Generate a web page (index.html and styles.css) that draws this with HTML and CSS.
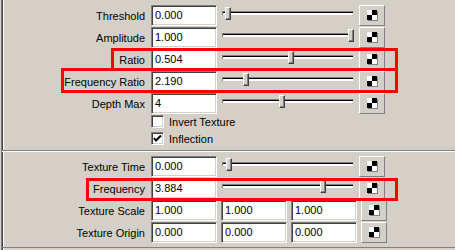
FILE: index.html
```html
<!DOCTYPE html>
<html>
<head>
<title>Texture Attributes</title>
<link rel="stylesheet" href="styles.css">
</head>
<body>
<div class="panel">
    <div class="section upper">
        <div class="row">
            <span class="lbl">Threshold</span>
            <span class="fld">0.000</span>
            <div class="slider"><div class="track"></div><div class="thumb" style="left:4px"></div></div>
            <span class="map"><svg width="11" height="11" viewBox="0 0 11 11"><rect x="1" y="1" width="10" height="10" fill="#808080"/><rect x="0" y="0" width="10" height="10" fill="#fff"/><rect x="5" y="0" width="5" height="5" fill="#000"/><rect x="0" y="5" width="5" height="5" fill="#000"/></svg></span>
        </div>
        <div class="row">
            <span class="lbl">Amplitude</span>
            <span class="fld">1.000</span>
            <div class="slider"><div class="track"></div><div class="thumb" style="left:127px"></div></div>
            <span class="map"><svg width="11" height="11" viewBox="0 0 11 11"><rect x="1" y="1" width="10" height="10" fill="#808080"/><rect x="0" y="0" width="10" height="10" fill="#fff"/><rect x="5" y="0" width="5" height="5" fill="#000"/><rect x="0" y="5" width="5" height="5" fill="#000"/></svg></span>
        </div>
        <div class="row">
            <span class="lbl">Ratio</span>
            <span class="fld">0.504</span>
            <div class="slider"><div class="track"></div><div class="thumb" style="left:67px"></div></div>
            <span class="map"><svg width="11" height="11" viewBox="0 0 11 11"><rect x="1" y="1" width="10" height="10" fill="#808080"/><rect x="0" y="0" width="10" height="10" fill="#fff"/><rect x="5" y="0" width="5" height="5" fill="#000"/><rect x="0" y="5" width="5" height="5" fill="#000"/></svg></span>
        </div>
        <div class="row">
            <span class="lbl">Frequency Ratio</span>
            <span class="fld">2.190</span>
            <div class="slider"><div class="track"></div><div class="thumb" style="left:22px"></div></div>
            <span class="map"><svg width="11" height="11" viewBox="0 0 11 11"><rect x="1" y="1" width="10" height="10" fill="#808080"/><rect x="0" y="0" width="10" height="10" fill="#fff"/><rect x="5" y="0" width="5" height="5" fill="#000"/><rect x="0" y="5" width="5" height="5" fill="#000"/></svg></span>
        </div>
        <div class="row">
            <span class="lbl">Depth Max</span>
            <span class="fld">4</span>
            <div class="slider"><div class="track"></div><div class="thumb" style="left:58px"></div></div>
            <span class="map"><svg width="11" height="11" viewBox="0 0 11 11"><rect x="1" y="1" width="10" height="10" fill="#808080"/><rect x="0" y="0" width="10" height="10" fill="#fff"/><rect x="5" y="0" width="5" height="5" fill="#000"/><rect x="0" y="5" width="5" height="5" fill="#000"/></svg></span>
        </div>
        <div class="check"><span class="box"></span>Invert Texture</div>
        <div class="check"><span class="box"><svg width="9" height="9" viewBox="0 0 9 9"><polyline points="1,4 3,6.5 8,1.5" fill="none" stroke="#000" stroke-width="2"/></svg></span>Inflection</div>
    </div>
    <div class="section lower">
        <div class="row">
            <span class="lbl">Texture Time</span>
            <span class="fld">0.000</span>
            <div class="slider"><div class="track"></div><div class="thumb" style="left:5px"></div></div>
            <span class="map"><svg width="11" height="11" viewBox="0 0 11 11"><rect x="1" y="1" width="10" height="10" fill="#808080"/><rect x="0" y="0" width="10" height="10" fill="#fff"/><rect x="5" y="0" width="5" height="5" fill="#000"/><rect x="0" y="5" width="5" height="5" fill="#000"/></svg></span>
        </div>
        <div class="row">
            <span class="lbl">Frequency</span>
            <span class="fld">3.884</span>
            <div class="slider"><div class="track"></div><div class="thumb" style="left:99px"></div></div>
            <span class="map"><svg width="11" height="11" viewBox="0 0 11 11"><rect x="1" y="1" width="10" height="10" fill="#808080"/><rect x="0" y="0" width="10" height="10" fill="#fff"/><rect x="5" y="0" width="5" height="5" fill="#000"/><rect x="0" y="5" width="5" height="5" fill="#000"/></svg></span>
        </div>
        <div class="row tri">
            <span class="lbl">Texture Scale</span>
            <span class="fld">1.000</span>
            <span class="fld">1.000</span>
            <span class="fld">1.000</span>
            <span class="map"><svg width="11" height="11" viewBox="0 0 11 11"><rect x="1" y="1" width="10" height="10" fill="#808080"/><rect x="0" y="0" width="10" height="10" fill="#fff"/><rect x="5" y="0" width="5" height="5" fill="#000"/><rect x="0" y="5" width="5" height="5" fill="#000"/></svg></span>
        </div>
        <div class="row tri">
            <span class="lbl">Texture Origin</span>
            <span class="fld">0.000</span>
            <span class="fld">0.000</span>
            <span class="fld">0.000</span>
            <span class="map"><svg width="11" height="11" viewBox="0 0 11 11"><rect x="1" y="1" width="10" height="10" fill="#808080"/><rect x="0" y="0" width="10" height="10" fill="#fff"/><rect x="5" y="0" width="5" height="5" fill="#000"/><rect x="0" y="5" width="5" height="5" fill="#000"/></svg></span>
        </div>
    </div>
    <!-- red highlight marks drawn over the form -->
    <div class="mark mark-ratio"></div>
    <div class="mark mark-freqratio"></div>
    <div class="mark mark-freq"></div>
</div>
</body>
</html>
```

FILE: styles.css
```css
body{
    margin: 0;
    background: #d4d0c8;
    font-family: "Liberation Sans", Arial, sans-serif;
    font-size: 11px;
    color: #000;
}
.panel{
    position: relative;
    margin-left: 1px;
    border-left: 1px solid #808080;
    box-shadow: inset 1px 0 #404040, inset 2px 0 #fff;
    height: 250px;
    box-sizing: border-box;
}
.upper{
    padding-top: 5px;
    padding-bottom: 5px;
    border-bottom: 1px solid #808080;
}
.lower{
    padding-top: 4px;
    padding-bottom: 3px;
    border-top: 1px solid #fff;
    border-bottom: 1px solid #808080;
}
.row{
    display: flex;
    align-items: center;
    height: 21px;
    margin-bottom: 1px;
}
.lbl{
    width: 149px;
    box-sizing: border-box;
    padding-right: 6px;
    text-align: right;
    white-space: nowrap;
}
.fld{
    width: 66px;
    height: 21px;
    box-sizing: border-box;
    margin-right: 4px;
    padding: 3px 0 0 3px;
    background: #fff;
    border-top: 1px solid #808080;
    border-left: 1px solid #808080;
    border-right: 1px solid #fff;
    border-bottom: 1px solid #fff;
    box-shadow: inset 1px 1px #404040, inset -1px -1px #d4d0c8;
    line-height: 13px;
}
.tri .fld:last-of-type{
    margin-right: 2px;
}
.slider{
    position: relative;
    width: 134px;
    height: 21px;
    margin-right: 4px;
}
.track{
    position: absolute;
    left: 1px;
    right: 2px;
    top: 6px;
    height: 4px;
    box-sizing: border-box;
    background: #fff;
    border-top: 1px solid #808080;
    border-left: 1px solid #808080;
    box-shadow: inset 0 1px #000;
}
.thumb{
    position: absolute;
    top: 2px;
    width: 6px;
    height: 13px;
    box-sizing: border-box;
    background: #d4d0c8;
    border-top: 1px solid #fff;
    border-left: 1px solid #fff;
    border-right: 1px solid #404040;
    border-bottom: 1px solid #404040;
    box-shadow: inset -1px -1px #808080;
}
.map{
    display: flex;
    align-items: center;
    justify-content: center;
    width: 26px;
    height: 21px;
    margin-top: -1px;
    box-sizing: border-box;
    border-top: 1px solid #fff;
    border-left: 1px solid #fff;
    border-right: 1px solid #808080;
    border-bottom: 1px solid #808080;
}
.check{
    display: flex;
    align-items: center;
    height: 13px;
    margin-top: 1px;
    margin-bottom: 4px;
    padding-left: 149px;
}
.check:last-child{
    margin-bottom: 0;
}
.box{
    display: flex;
    align-items: center;
    justify-content: center;
    width: 13px;
    height: 13px;
    box-sizing: border-box;
    margin-right: 5px;
    background: #fff;
    border-top: 1px solid #808080;
    border-left: 1px solid #808080;
    border-right: 1px solid #fff;
    border-bottom: 1px solid #fff;
    box-shadow: inset 1px 1px #404040, inset -1px -1px #d4d0c8;
}
.mark{
    position: absolute;
    border: 3px solid #ff0000;
    box-sizing: border-box;
}
.mark-ratio{
    left: 109px;
    top: 48px;
    width: 287px;
    height: 23px;
}
.mark-freqratio{
    left: 59px;
    top: 68px;
    width: 337px;
    height: 25px;
}
.mark-freq{
    left: 84px;
    top: 178px;
    width: 312px;
    height: 23px;
}
```
